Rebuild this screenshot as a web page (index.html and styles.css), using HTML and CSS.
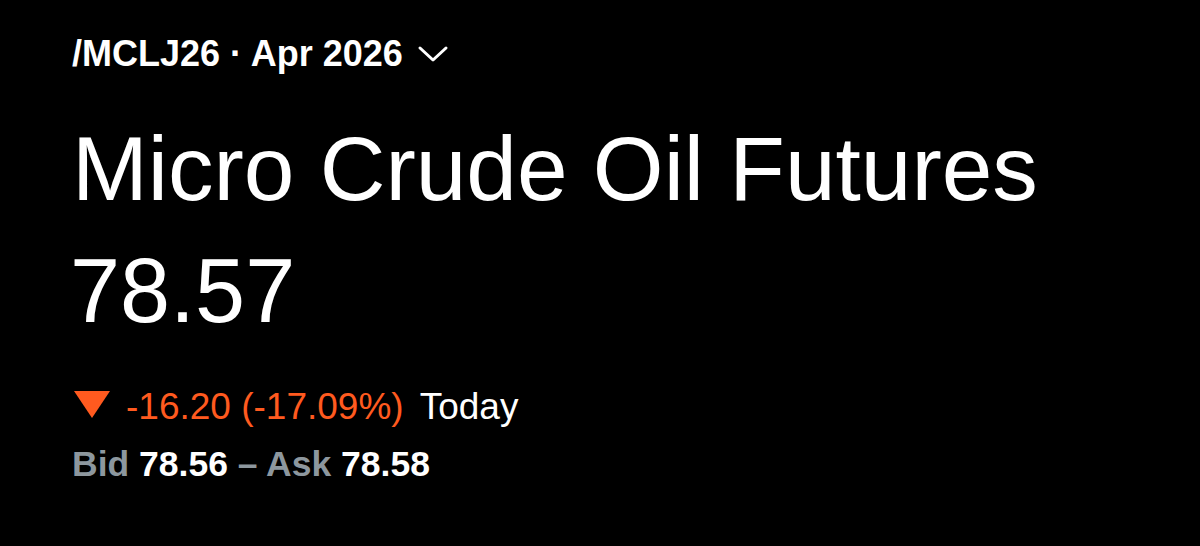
FILE: index.html
```html
<!DOCTYPE html>
<html>
<head>
<meta charset="utf-8">
<link rel="stylesheet" href="styles.css">
</head>
<body>
<main class="quote">
  <div class="symbol-row">
    <span class="symbol">/MCLJ26 · Apr 2026</span>
    <svg class="chevron" width="32" height="18" viewBox="0 0 32 18"><path d="M3 3 L16 15 L29 3" fill="none" stroke="#fff" stroke-width="3" stroke-linecap="round" stroke-linejoin="round"/></svg>
  </div>
  <h1 class="title">Micro Crude Oil Futures</h1>
  <div class="price">78.57</div>
  <div class="change-row">
    <svg class="down" width="38" height="28" viewBox="0 0 38 28"><polygon points="1,1 37,1 19,28" fill="#ff5a1f"/></svg>
    <span class="change">-16.20 (-17.09%)</span>
    <span class="period">Today</span>
  </div>
  <div class="bidask">
    <span class="lbl">Bid</span> <span class="val">78.56</span> <span class="lbl">–</span> <span class="lbl">Ask</span> <span class="val">78.58</span>
  </div>
</main>
</body>
</html>
```
FILE: styles.css
```css
html, body {
  margin: 0;
  padding: 0;
  background: #000;
  width: 1200px;
  height: 546px;
  overflow: hidden;
}
body {
  font-family: "Liberation Sans", Arial, sans-serif;
  color: #fff;
}
.quote {
  padding: 32px 0 0 72px;
  display: flex;
  flex-direction: column;
}
.symbol-row {
  display: flex;
  align-items: center;
  gap: 14px;
  height: 44px;
}
.symbol {
  font-size: 36px;
  font-weight: 700;
  line-height: 44px;
}
.title {
  margin: 41px 0 0;
  font-size: 91px;
  font-weight: 400;
  line-height: 104px;
}
.price {
  font-size: 90px;
  line-height: 104px;
  margin-top: 18px;
  margin-left: -2px;
}
.change-row {
  display: flex;
  align-items: center;
  margin-top: 42px;
  font-size: 37px;
  line-height: 44px;
}
.down {
  margin-right: 15px;
  margin-left: 1px;
  margin-top: -6px;
}
.change {
  color: #ff5a1f;
  margin-right: 16px;
}
.period {
  color: #fff;
}
.bidask {
  margin-top: 13px;
  font-size: 35.5px;
  font-weight: 700;
  line-height: 44px;
}
.lbl {
  color: #8d979e;
}
.val {
  color: #fff;
}
```
